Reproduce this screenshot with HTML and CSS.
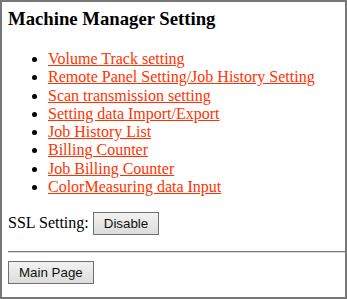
FILE: index.html
```html
<!DOCTYPE html>
<html>
<head>
  <title>Machine Manager Setting</title>
  <meta charset="UTF-8">
  <link rel="stylesheet" href="styles.css">
</head>
<body>
  <div class="frame">
    <h3>Machine Manager Setting</h3>
    <ul class="menu">
      <li><a href="#">Volume Track setting</a></li>
      <li><a href="#">Remote Panel Setting/Job History Setting</a></li>
      <li><a href="#">Scan transmission setting</a></li>
      <li><a href="#">Setting data Import/Export</a></li>
      <li><a href="#">Job History List</a></li>
      <li><a href="#">Billing Counter</a></li>
      <li><a href="#">Job Billing Counter</a></li>
      <li><a href="#">ColorMeasuring data Input</a></li>
    </ul>
    <p class="ssl">SSL Setting: <button class="btn">Disable</button></p>
    <hr>
    <button class="btn">Main Page</button>
  </div>
</body>
</html>
```

FILE: styles.css
```css
html, body {
  margin: 0;
  height: 100%;
}
body {
  font-family: "Liberation Serif", "Times New Roman", serif;
  font-size: 16px;
}
.frame {
  box-sizing: border-box;
  height: 100%;
  border: 2px solid #777;
  padding: 6px 0 0 6px;
}
h3 {
  font-size: 18.72px;
  margin: 0;
}
.menu {
  margin: 20px 0 16px;
  padding-left: 40px;
  line-height: 18.3px;
}
.menu a {
  color: #ff3300;
}
.ssl {
  margin: 16px 0;
}
hr {
  margin: 16px 0 8px;
  border: 0;
  border-top: 1px solid #777;
  border-bottom: 1px solid #ddd;
}
.btn {
  font-family: "Liberation Sans", Arial, sans-serif;
  font-size: 13.33px;
  color: #111;
  background: linear-gradient(#f2f2f2, #dcdcdc);
  border: 1px solid #707070;
  padding: 0 10px;
  height: 23px;
}
```
